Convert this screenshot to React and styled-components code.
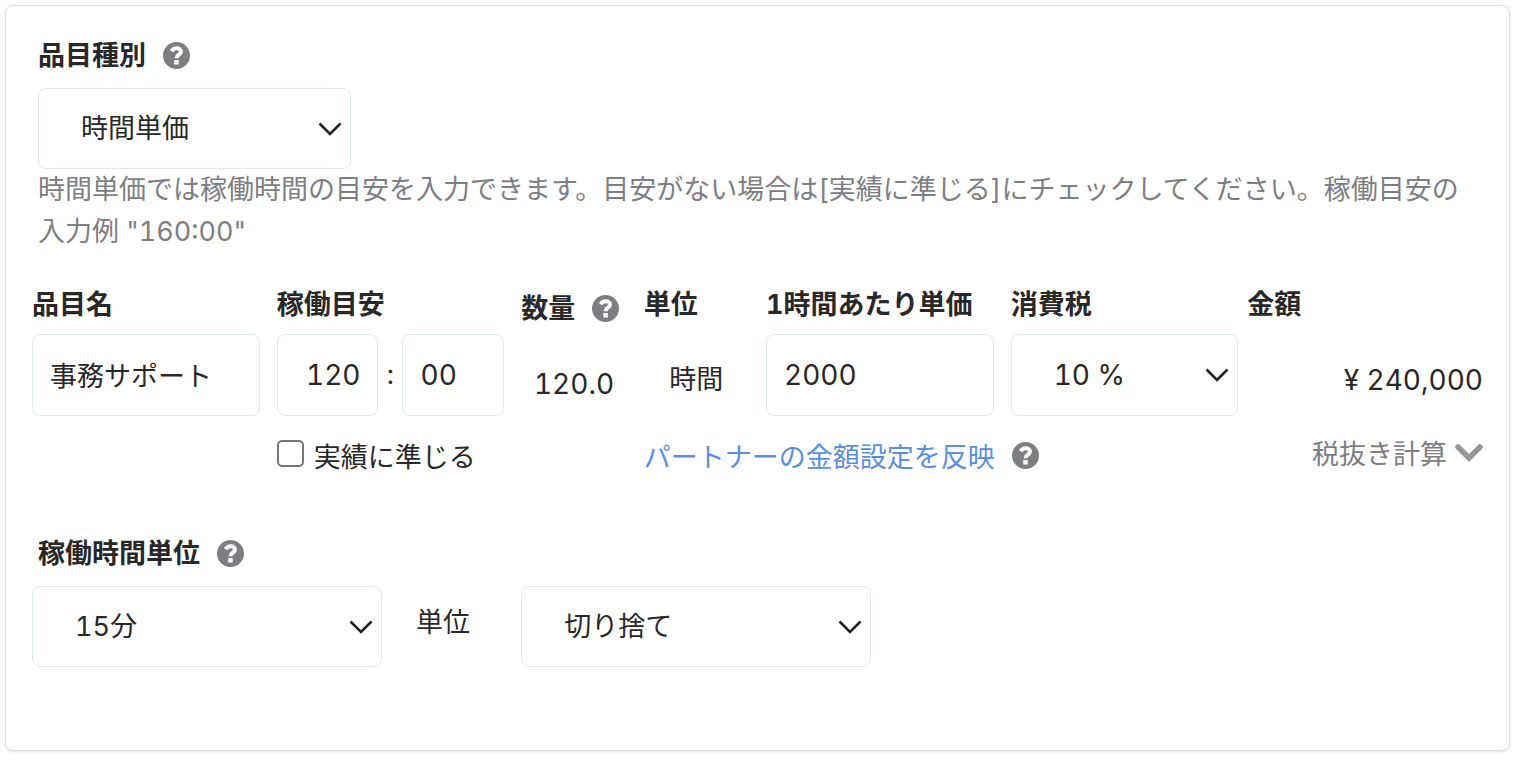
import React from "react"
import styled, { createGlobalStyle, css } from "styled-components"

const GlobalStyle = createGlobalStyle`
  * {
    box-sizing: border-box;
  }

  body {
    margin: 0;
    background-color: #fff;
    color: #282828;
    font-family: Inter, "Noto Sans CJK JP", sans-serif;
    font-size: 27px;
    line-height: 42px;
    font-variant-numeric: tabular-nums;
  }
`

const Page = styled.main`
  padding: 5px 6px 8px 5px;
`

const Card = styled.form`
  padding: 29px 0 83px;
  border: 1px solid #dedede;
  border-radius: 8px;
  box-shadow: 0 1px 3px rgba(0, 0, 0, 0.12);
`

const Section = styled.section`
  padding: 0 32px;
  margin-top: ${(props) => props.$top || 0}px;
`

const Columns = styled.div`
  display: grid;
  grid-template-columns: repeat(12, minmax(0, 1fr));
  column-gap: 17px;
  align-items: start;
  padding: 0 26px;
  margin-top: ${(props) => props.$top || 0}px;
`

const Cell = styled.div`
  grid-column: ${(props) => props.$start || "auto"} / span ${(props) => props.$span || 2};
  min-width: 0;
  white-space: nowrap;
`

const AmountCell = styled(Cell)`
  margin-left: -8px;
`

const Heading = styled.div`
  display: flex;
  align-items: center;
  gap: 17px;
  padding-top: ${(props) => (props.$lowered ? 4 : 0)}px;
  margin-bottom: ${(props) => props.$bottom || 8}px;
  font-weight: 700;
`

const HelpButton = styled.button`
  display: flex;
  flex: none;
  margin: 0 0 2px;
  padding: 0;
  border: none;
  background: none;
  color: #7d7e82;
  cursor: pointer;
`

const field = css`
  width: 100%;
  border: 1px solid #e1e9ed;
  border-radius: 8px;
  background-color: #fff;
  color: inherit;
  font-family: inherit;
  font-variant-numeric: inherit;
`

const TextInput = styled.input`
  ${field}
  display: block;
  height: 82px;
  padding: ${(props) => (props.$numeric ? "0 17px" : "0 17px 2px")};
  font-size: ${(props) => (props.$numeric ? 28 : 27)}px;
  text-align: ${(props) => props.$align || "left"};
`

const SelectBox = styled.div`
  position: relative;
  max-width: ${(props) => (props.$narrow ? "313px" : "none")};
`

const StyledSelect = styled.select`
  ${field}
  display: block;
  appearance: none;
  height: ${(props) => (props.$tall ? 82 : 81)}px;
  padding: 0 42px;
  font-size: ${(props) => (props.$numeric ? 28 : 27)}px;
`

const SelectArrow = styled.svg`
  position: absolute;
  top: 50%;
  right: 9px;
  width: 24px;
  height: 14px;
  margin-top: -7px;
  pointer-events: none;
`

const HelpText = styled.p`
  margin: 0;
  color: #7d7e82;
`

const Num = styled.span`
  font-size: 28px;
`

const TimeFields = styled.div`
  display: grid;
  grid-template-columns: minmax(0, 1fr) 24px minmax(0, 1fr);
  align-items: center;
  text-align: center;
`

const Value = styled.div`
  padding-top: 25px;
  text-align: ${(props) => props.$align || "center"};
`

const CheckLabel = styled.label`
  display: flex;
  align-items: center;
  gap: 10px;
`

const Checkbox = styled.input`
  appearance: none;
  flex: none;
  width: 27px;
  height: 27px;
  margin: 0 0 10px;
  border: 2px solid #767676;
  border-radius: 5px;
  background-color: #fff;

  &:checked {
    background-color: #5a8fdf;
  }
`

const PartnerRow = styled.div`
  display: flex;
  align-items: center;
  gap: 17px;

  ${HelpButton} {
    margin-bottom: 6px;
  }
`

const PartnerLink = styled.a`
  color: #5a8fdf;
  text-decoration: none;
`

const TaxToggle = styled.button`
  display: flex;
  align-items: center;
  gap: 8px;
  margin-left: auto;
  padding: 0;
  border: none;
  background: none;
  color: #7d7e82;
  font: inherit;
  line-height: 36px;
  cursor: pointer;

  svg {
    margin-bottom: 4px;
  }
`

const UnitText = styled.div`
  padding: 16px 17px;
`

const Help = ({ label }) => (
  <HelpButton type="button" aria-label={label}>
    <svg width="27" height="27" viewBox="0 0 27 27" aria-hidden="true">
      <circle cx="13.5" cy="13.5" r="13.5" fill="currentColor" />
      <path
        d="M8.6 9.2 C9.8 7.2 11.4 6.3 13.6 6.3 C16.2 6.3 18 7.7 18 9.7 C18 12.6 13.5 12.8 13.5 16.2"
        fill="none"
        stroke="#fff"
        strokeWidth="4"
      />
      <rect x="11.2" y="18" width="4.6" height="4.6" rx="0.6" fill="#fff" />
    </svg>
  </HelpButton>
)

const Select = ({ id, options, narrow, ...rest }) => (
  <SelectBox $narrow={narrow}>
    <StyledSelect id={id} {...rest}>
      {options.map((option) => (
        <option key={option}>{option}</option>
      ))}
    </StyledSelect>
    <SelectArrow viewBox="0 0 24 14" aria-hidden="true">
      <path d="M1.5 1.5 L12 12 L22.5 1.5" fill="none" stroke="#222" strokeWidth="2.6" />
    </SelectArrow>
  </SelectBox>
)

const App = () => {
  return (
    <Page>
      <GlobalStyle />
      <Card>
        <Section>
          <Heading $bottom={11}>
            <label htmlFor="item_type">品目種別</label>
            <Help label="品目種別" />
          </Heading>
          <Select id="item_type" options={["時間単価"]} narrow />
          <HelpText>
            時間単価では稼働時間の目安を入力できます。目安がない場合は[実績に準じる]にチェックしてください。稼働目安の入力例 "160:00"
          </HelpText>
        </Section>

        <Columns $top={31}>
          <Cell>
            <Heading as="label" htmlFor="item_name">品目名</Heading>
            <TextInput id="item_name" defaultValue="事務サポート" />
          </Cell>
          <Cell>
            <Heading as="label" htmlFor="hours">稼働目安</Heading>
            <TimeFields>
              <TextInput id="hours" $numeric $align="right" defaultValue="120" />
              <span>:</span>
              <TextInput aria-label="稼働目安" $numeric defaultValue="00" />
            </TimeFields>
          </Cell>
          <Cell $span={1}>
            <Heading $lowered>
              数量
              <Help label="数量" />
            </Heading>
            <Value>
              <Num>120.0</Num>
            </Value>
          </Cell>
          <Cell $span={1}>
            <Heading>単位</Heading>
            <Value>時間</Value>
          </Cell>
          <Cell>
            <Heading as="label" htmlFor="price">1時間あたり単価</Heading>
            <TextInput id="price" $numeric defaultValue="2000" />
          </Cell>
          <Cell>
            <Heading as="label" htmlFor="tax">消費税</Heading>
            <Select id="tax" options={["10 %"]} $tall $numeric />
          </Cell>
          <AmountCell>
            <Heading>金額</Heading>
            <Value $align="right">
              <Num>¥ 240,000</Num>
            </Value>
          </AmountCell>
        </Columns>

        <Columns $top={21}>
          <Cell $start={3}>
            <CheckLabel>
              <Checkbox type="checkbox" />
              実績に準じる
            </CheckLabel>
          </Cell>
          <Cell $start={6} $span={4}>
            <PartnerRow>
              <PartnerLink href="#partner">パートナーの金額設定を反映</PartnerLink>
              <Help label="パートナーの金額設定を反映" />
            </PartnerRow>
          </Cell>
          <Cell $start={11}>
            <TaxToggle type="button">
              税抜き計算
              <svg width="28" height="18" viewBox="0 0 28 18" aria-hidden="true">
                <path
                  d="M3 3 L14 14 L25 3"
                  fill="none"
                  stroke="#95969a"
                  strokeWidth="5.5"
                  strokeLinecap="round"
                />
              </svg>
            </TaxToggle>
          </Cell>
        </Columns>

        <Section $top={54}>
          <Heading $bottom={11}>
            <label htmlFor="time_unit">稼働時間単位</label>
            <Help label="稼働時間単位" />
          </Heading>
        </Section>
        <Columns>
          <Cell $span={3}>
            <Select id="time_unit" options={["15分"]} />
          </Cell>
          <Cell $span={1}>
            <UnitText>単位</UnitText>
          </Cell>
          <Cell $span={3}>
            <Select options={["切り捨て"]} aria-label="端数処理" />
          </Cell>
        </Columns>
      </Card>
    </Page>
  )
}

export default App
